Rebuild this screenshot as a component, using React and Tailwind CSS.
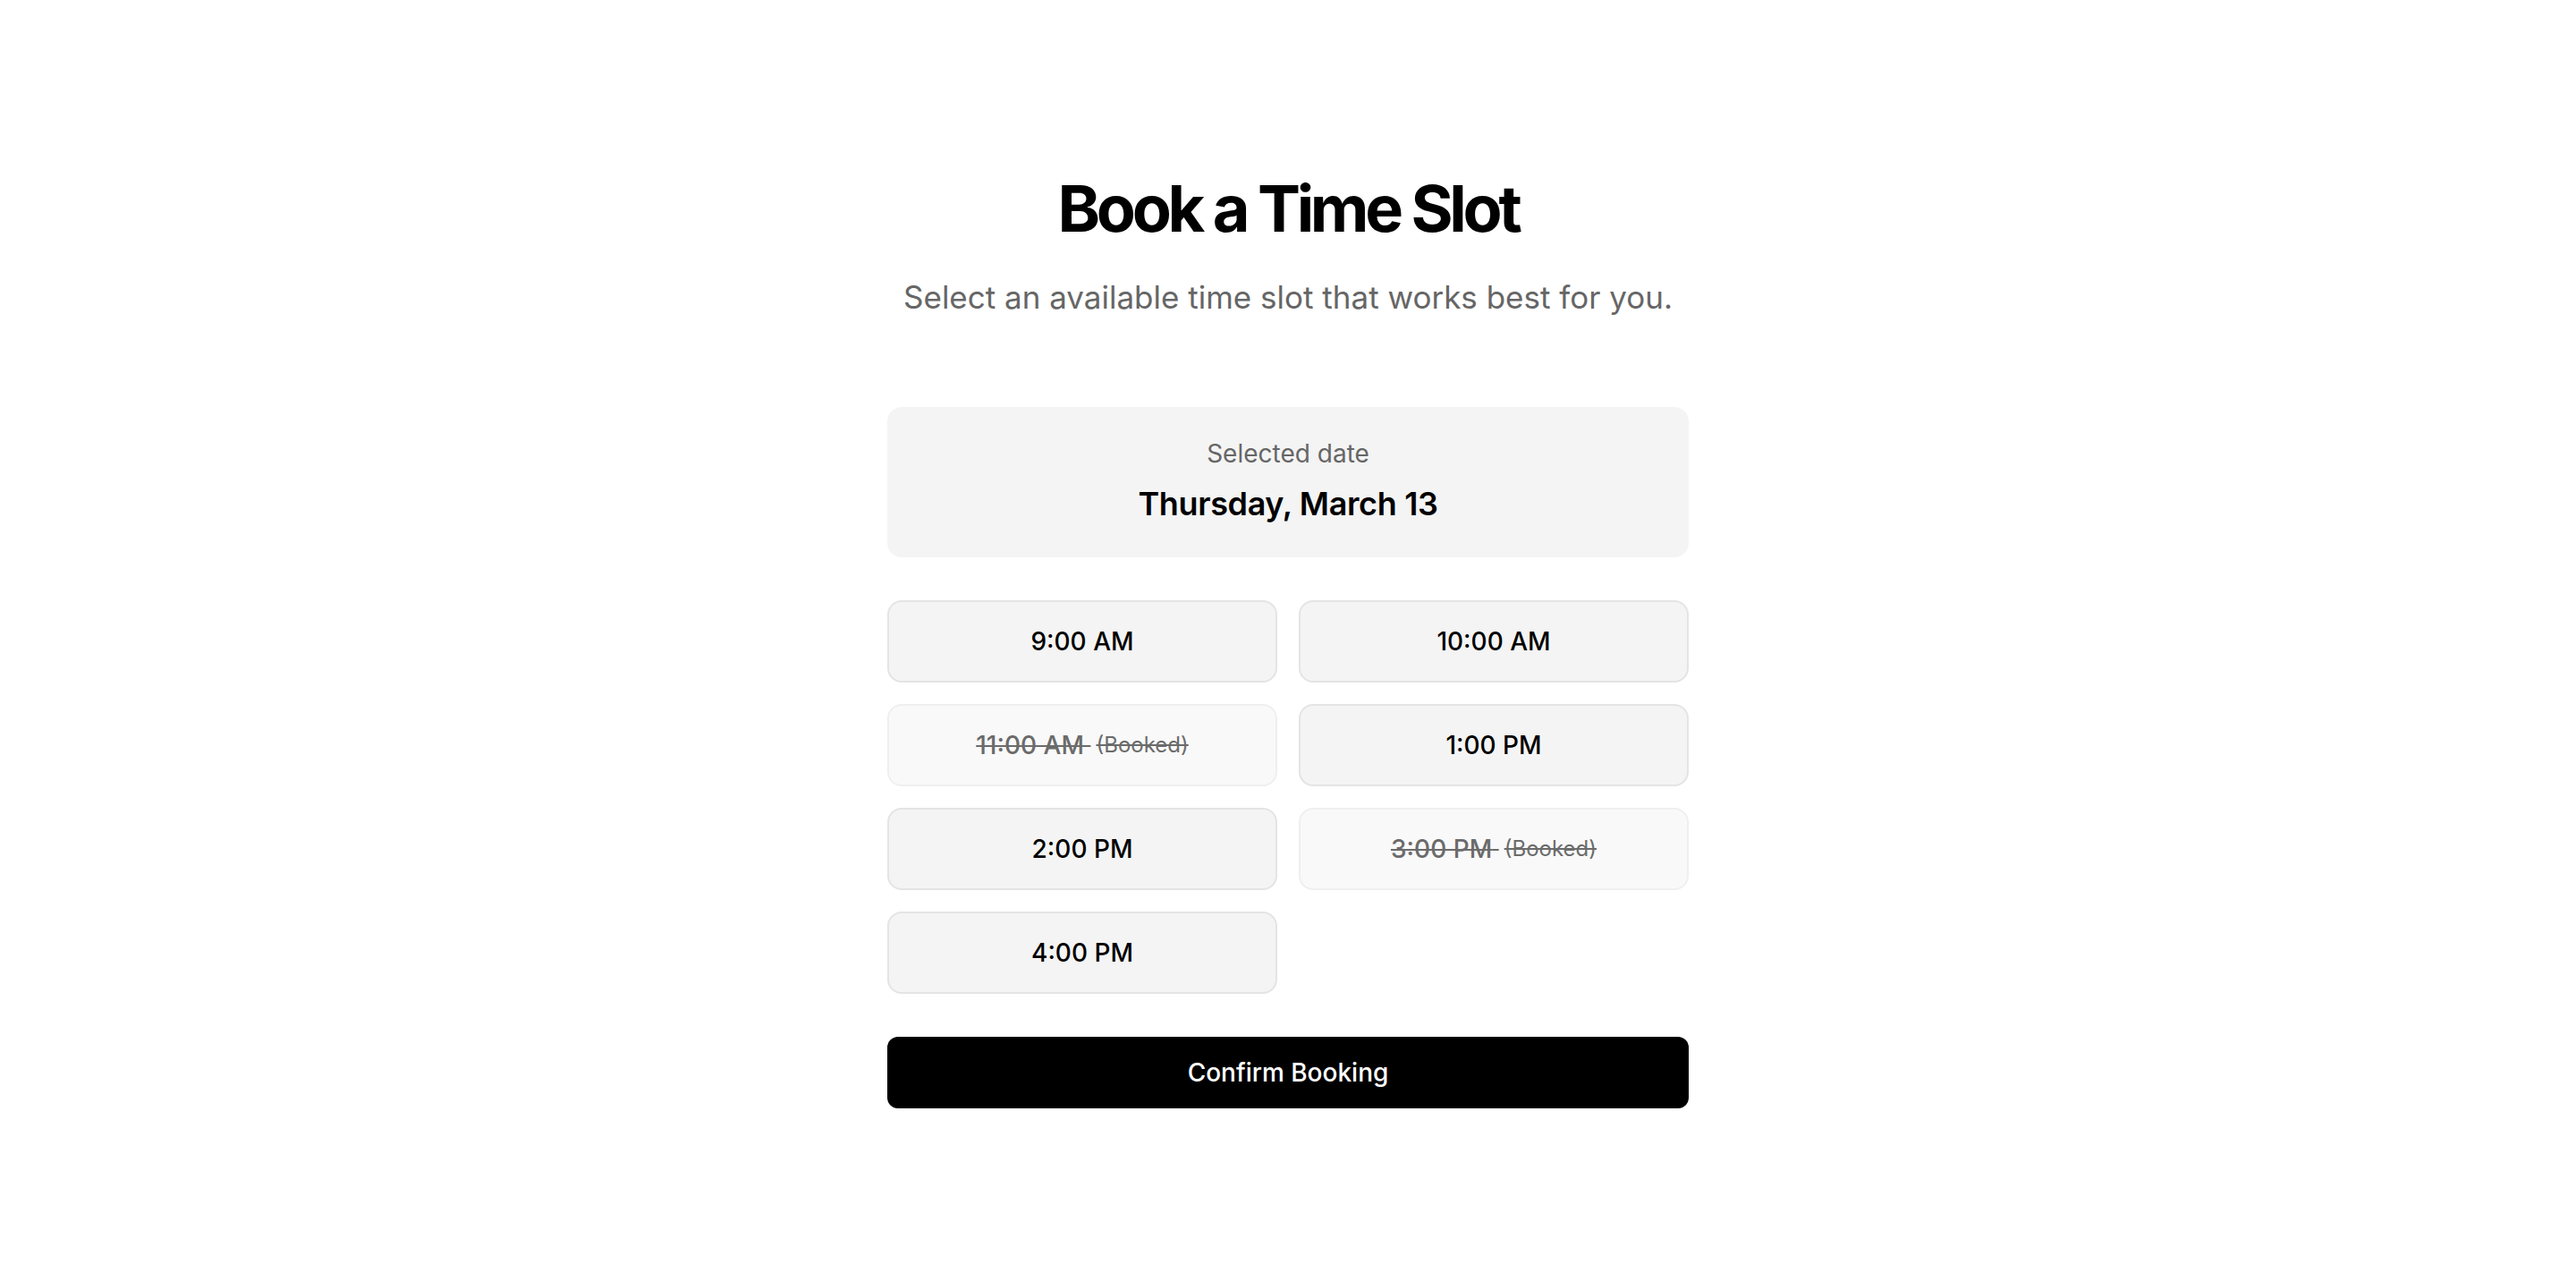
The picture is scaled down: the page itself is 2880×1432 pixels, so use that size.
import React from "react";

const slots = [
  { time: "9:00 AM", booked: false },
  { time: "10:00 AM", booked: false },
  { time: "11:00 AM", booked: true },
  { time: "1:00 PM", booked: false },
  { time: "2:00 PM", booked: false },
  { time: "3:00 PM", booked: true },
  { time: "4:00 PM", booked: false },
];

export default function App() {
  return (
    <div
      className="min-h-screen w-full bg-white flex items-center justify-center text-black"
      style={{ fontFamily: "Inter, 'Noto Sans', sans-serif" }}
    >
      <div className="w-[896px] flex flex-col">
        <div className="flex flex-col items-center text-center">
          <h1 className="text-[72px] leading-[80px] font-bold tracking-[-0.06em]">
            Book a Time Slot
          </h1>
          <p className="mt-[33px] text-[35px] leading-[52px] text-[#666666]">
            Select an available time slot that works best for you.
          </p>
        </div>
        <div className="mt-[97px] rounded-[16px] bg-[#f4f4f4] h-[168px] flex flex-col items-center justify-center">
          <div className="text-[28px] leading-[40px] text-[#666666]">Selected date</div>
          <div className="mt-[8px] text-[36px] leading-[56px] font-semibold tracking-[-0.01em]">
            Thursday, March 13
          </div>
        </div>
        <div className="mt-[48px] grid grid-cols-2 gap-[24px]">
          {slots.map((s) =>
            s.booked ? (
              <button
                key={s.time}
                disabled
                className="h-[92px] rounded-[16px] border-2 border-[#efefef] bg-[#f9f9f9] text-[28px] text-[#6b6b6b] flex items-center justify-center"
              >
                <span className="line-through font-medium">{s.time}&nbsp;</span>
                <span className="ml-[6px] text-[24px] line-through">(Booked)</span>
              </button>
            ) : (
              <button
                key={s.time}
                className="h-[92px] rounded-[16px] border-2 border-[#e4e4e4] bg-[#f4f4f4] text-[28px] font-medium text-black flex items-center justify-center"
              >
                {s.time}
              </button>
            )
          )}
        </div>
        <button className="mt-[48px] h-[80px] rounded-[12px] bg-black text-white text-[28px] font-medium">
          Confirm Booking
        </button>
      </div>
    </div>
  );
}
